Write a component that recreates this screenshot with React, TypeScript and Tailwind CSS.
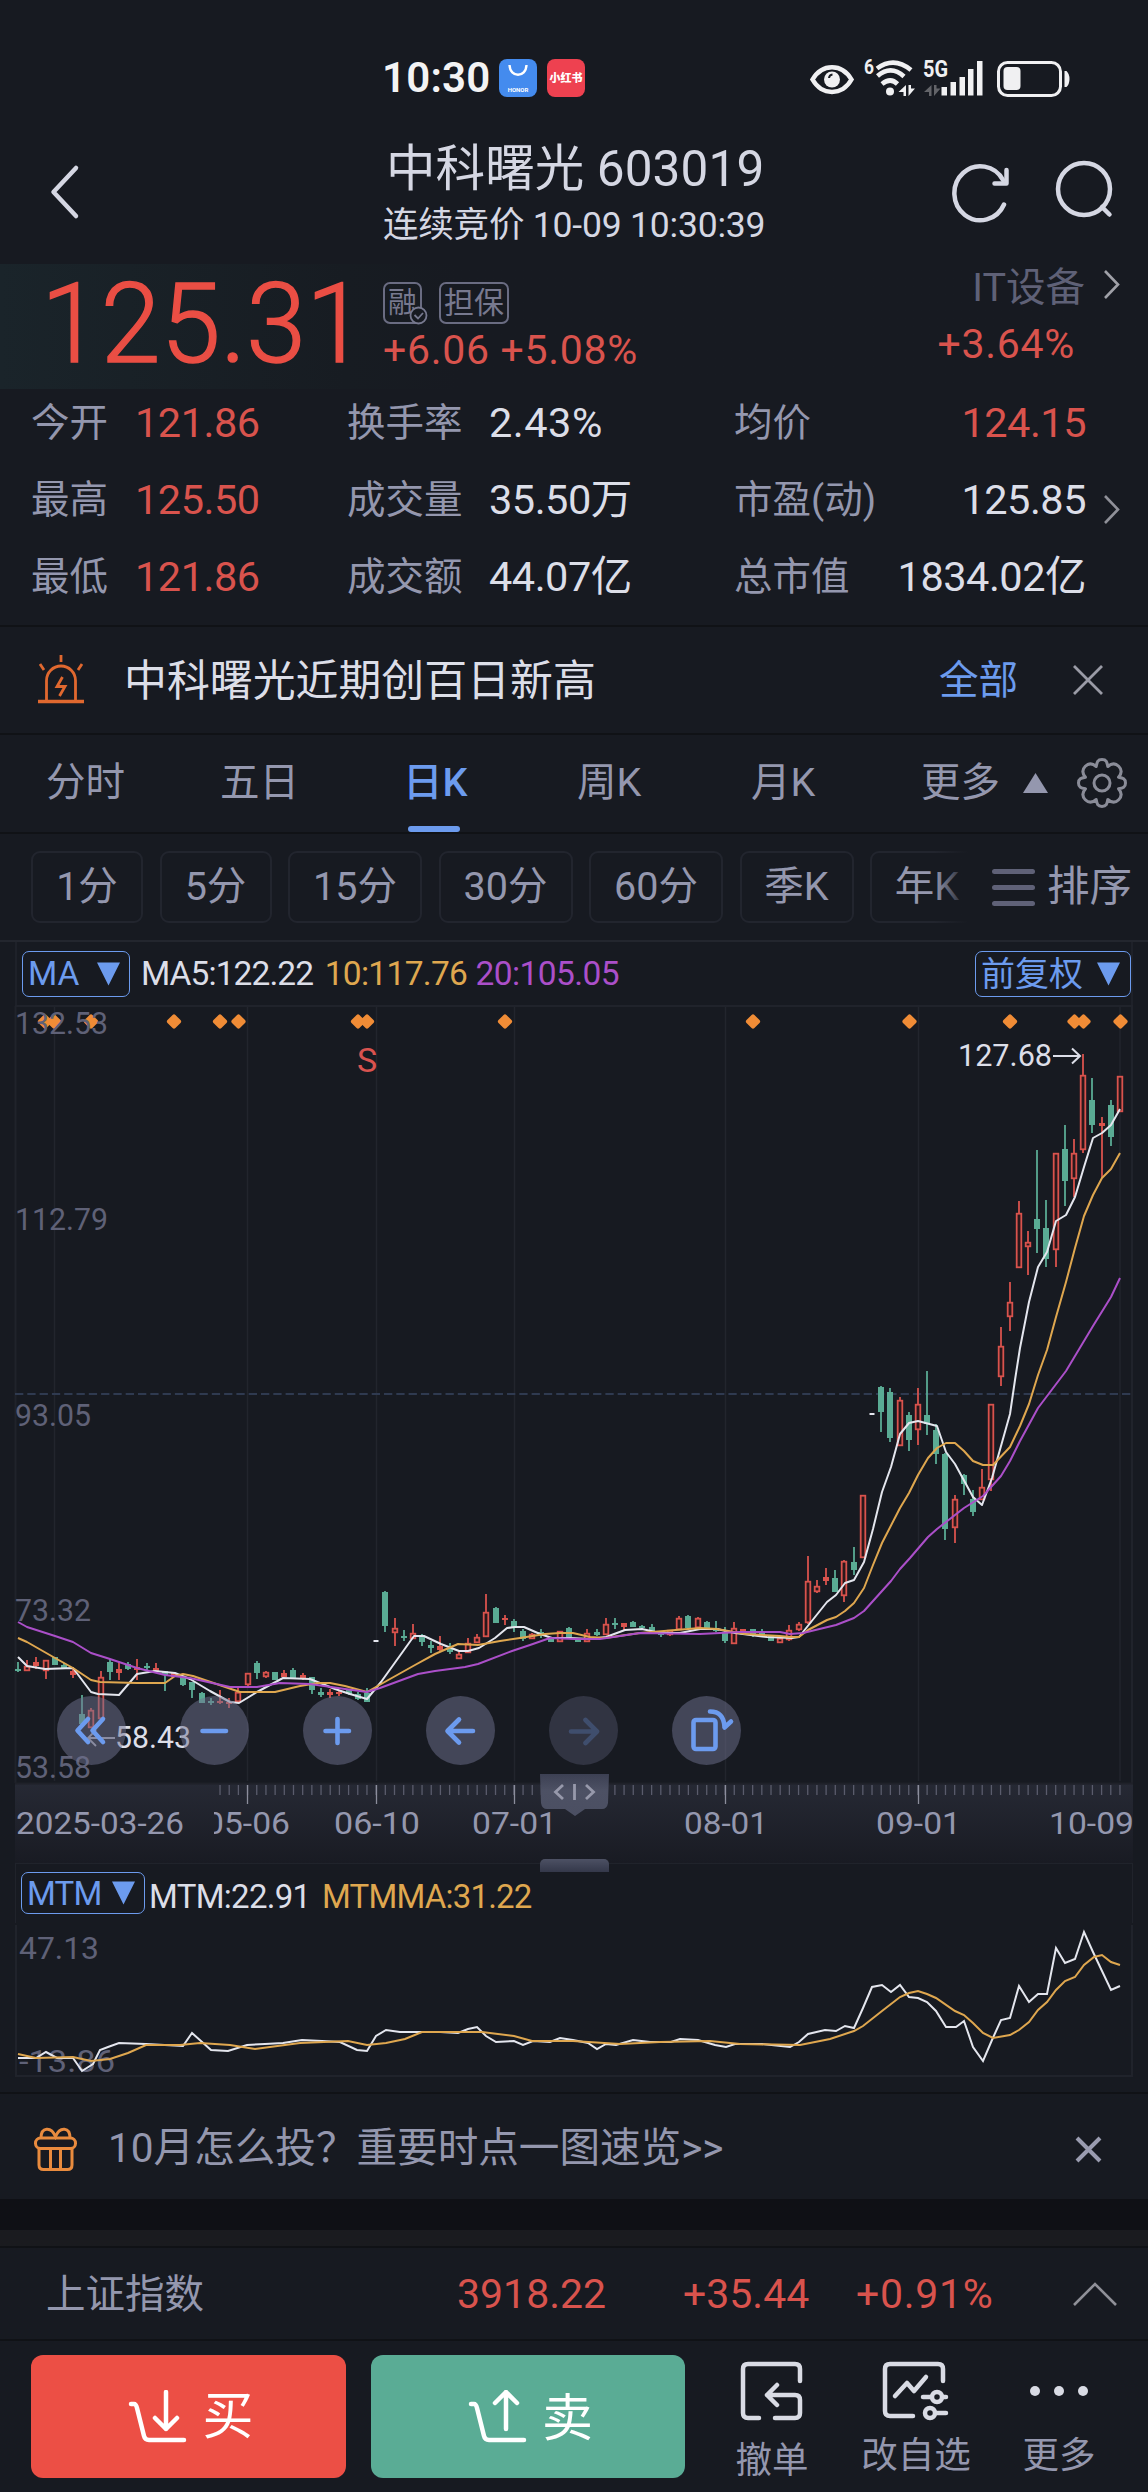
import React from 'react';

type Candle = [number, 'r' | 'g' | 'w', number, number, number, number];

/* index, colour, high, low, body top, body bottom */
const candles: Candle[] = [
  [0, 'g', 1662, 1672, 1669, 1671], [1, 'r', 1660, 1671, 1666, 1671], [2, 'r', 1657, 1669, 1662, 1666],
  [3, 'r', 1660, 1679, 1660, 1671], [4, 'g', 1657, 1665, 1657, 1665], [5, 'g', 1663, 1669, 1665, 1668],
  [6, 'r', 1668, 1678, 1671, 1675], [7, 'g', 1695, 1727, 1714, 1724], [8, 'r', 1708, 1728, 1710, 1728],
  [9, 'r', 1671, 1719, 1677, 1719], [10, 'g', 1659, 1680, 1662, 1672], [11, 'r', 1661, 1680, 1669, 1673],
  [12, 'g', 1662, 1670, 1664, 1669], [13, 'r', 1659, 1680, 1667, 1670], [14, 'g', 1663, 1671, 1666, 1667],
  [15, 'r', 1663, 1671, 1668, 1671], [16, 'g', 1671, 1691, 1671, 1675], [17, 'r', 1672, 1677, 1673, 1677],
  [18, 'g', 1676, 1686, 1677, 1685], [19, 'g', 1682, 1698, 1682, 1690], [20, 'g', 1692, 1703, 1693, 1703],
  [21, 'g', 1698, 1705, 1701, 1703], [22, 'r', 1690, 1704, 1701, 1703], [23, 'r', 1698, 1708, 1702, 1703],
  [24, 'r', 1688, 1703, 1692, 1702], [25, 'r', 1673, 1687, 1673, 1685], [26, 'g', 1661, 1679, 1663, 1673],
  [27, 'r', 1671, 1678, 1672, 1677], [28, 'g', 1672, 1680, 1672, 1680], [29, 'r', 1670, 1677, 1673, 1677],
  [30, 'g', 1668, 1679, 1670, 1679], [31, 'r', 1673, 1680, 1675, 1679], [32, 'g', 1677, 1694, 1677, 1690],
  [33, 'g', 1688, 1697, 1692, 1695], [34, 'r', 1689, 1698, 1692, 1695], [35, 'r', 1690, 1696, 1692, 1693],
  [36, 'g', 1690, 1695, 1690, 1694], [37, 'g', 1692, 1700, 1694, 1699], [38, 'g', 1688, 1702, 1693, 1702],
  [39, 'w', 1641, 1641, 1640, 1642], [40, 'g', 1591, 1632, 1592, 1626], [41, 'r', 1618, 1646, 1628, 1633],
  [42, 'g', 1630, 1641, 1636, 1637], [43, 'r', 1624, 1639, 1633, 1639], [44, 'g', 1634, 1646, 1636, 1642],
  [45, 'g', 1641, 1653, 1645, 1648], [46, 'r', 1636, 1651, 1646, 1650], [47, 'g', 1643, 1654, 1648, 1652],
  [48, 'r', 1652, 1659, 1654, 1659], [49, 'r', 1638, 1653, 1643, 1653], [50, 'r', 1634, 1643, 1637, 1643],
  [51, 'r', 1594, 1637, 1612, 1637], [52, 'g', 1607, 1623, 1608, 1623], [53, 'r', 1615, 1625, 1618, 1620],
  [54, 'g', 1619, 1632, 1621, 1628], [55, 'g', 1629, 1641, 1631, 1639], [56, 'r', 1633, 1639, 1634, 1639],
  [57, 'g', 1629, 1638, 1632, 1636], [58, 'g', 1637, 1642, 1638, 1642], [59, 'r', 1631, 1642, 1631, 1642],
  [60, 'g', 1627, 1638, 1628, 1637], [61, 'g', 1638, 1642, 1639, 1642], [62, 'r', 1629, 1642, 1633, 1642],
  [63, 'g', 1629, 1636, 1632, 1635], [64, 'r', 1618, 1635, 1624, 1635], [65, 'g', 1618, 1629, 1623, 1624],
  [66, 'r', 1623, 1630, 1623, 1627], [67, 'g', 1621, 1627, 1622, 1627], [68, 'g', 1625, 1629, 1626, 1628],
  [69, 'g', 1624, 1632, 1627, 1632], [70, 'g', 1632, 1637, 1633, 1635], [71, 'r', 1630, 1636, 1630, 1635],
  [72, 'r', 1616, 1630, 1618, 1630], [73, 'g', 1615, 1629, 1616, 1628], [74, 'r', 1617, 1629, 1618, 1628],
  [75, 'g', 1621, 1630, 1622, 1629], [76, 'g', 1621, 1632, 1628, 1631], [77, 'g', 1627, 1643, 1633, 1641],
  [78, 'r', 1622, 1644, 1628, 1644], [79, 'r', 1629, 1632, 1629, 1631], [80, 'g', 1629, 1637, 1629, 1634],
  [81, 'g', 1629, 1637, 1632, 1635], [82, 'g', 1635, 1641, 1636, 1641], [83, 'r', 1638, 1643, 1638, 1643],
  [84, 'r', 1625, 1641, 1630, 1640], [85, 'r', 1622, 1631, 1624, 1630], [86, 'r', 1556, 1624, 1581, 1623],
  [87, 'r', 1580, 1593, 1586, 1592], [88, 'r', 1568, 1585, 1577, 1581], [89, 'g', 1570, 1592, 1578, 1592],
  [90, 'r', 1560, 1602, 1561, 1596], [91, 'g', 1547, 1575, 1562, 1570], [92, 'r', 1495, 1558, 1495, 1558],
  [93, 'w', 1414, 1414, 1413, 1415], [94, 'g', 1386, 1432, 1387, 1412], [95, 'g', 1388, 1442, 1392, 1438],
  [96, 'r', 1397, 1446, 1400, 1446], [97, 'g', 1412, 1451, 1415, 1440], [98, 'r', 1388, 1445, 1404, 1430],
  [99, 'g', 1371, 1435, 1415, 1424], [100, 'g', 1424, 1464, 1430, 1454], [101, 'g', 1453, 1540, 1454, 1529],
  [102, 'r', 1495, 1543, 1499, 1528], [103, 'g', 1474, 1495, 1475, 1484], [104, 'g', 1490, 1516, 1499, 1512],
  [105, 'r', 1469, 1500, 1487, 1500], [106, 'r', 1404, 1491, 1404, 1480], [107, 'r', 1327, 1386, 1346, 1377],
  [108, 'r', 1282, 1331, 1302, 1317], [109, 'r', 1201, 1268, 1213, 1268], [110, 'r', 1231, 1275, 1242, 1247],
  [111, 'g', 1150, 1253, 1219, 1229], [112, 'g', 1200, 1267, 1228, 1259], [113, 'r', 1153, 1267, 1153, 1250],
  [114, 'g', 1125, 1206, 1149, 1181], [115, 'r', 1139, 1197, 1153, 1179], [116, 'r', 1054, 1153, 1075, 1150],
  [117, 'g', 1078, 1133, 1100, 1125], [118, 'r', 1117, 1178, 1123, 1126], [119, 'g', 1100, 1146, 1105, 1137],
  [120, 'r', 1076, 1112, 1076, 1112],
];

const ma5 =
  '18,1657 27,1666 45,1669 73,1668 82,1680 91,1692 98,1694 119,1695 137,1674 155,1671 175,1673 190,1679 210,1691 230,1702 239,1703 257,1692 283,1678 310,1679 335,1689 350,1694 367,1699 381,1682 404,1650 414,1636 424,1636 441,1644 459,1651 468,1651 479,1648 495,1638 507,1628 515,1627 524,1627 540,1634 552,1638 570,1638 590,1639 606,1637 625,1630 642,1629 660,1633 680,1633 700,1629 717,1629 735,1633 767,1637 792,1638 799,1637 803,1632 827,1602 836,1595 845,1583 854,1580 864,1562 873,1529 882,1492 891,1467 900,1434 909,1423 918,1421 937,1426 946,1452 955,1464 973,1497 982,1505 992,1478 1010,1414 1015,1380 1020,1348 1029,1302 1038,1267 1047,1252 1056,1221 1066,1215 1075,1197 1084,1167 1093,1138 1102,1133 1111,1125 1120,1109';
const ma10 =
  '18,1638 27,1642 55,1658 73,1668 91,1680 100,1682 137,1683 165,1683 175,1676 183,1674 193,1676 240,1692 275,1692 300,1686 318,1683 330,1683 345,1686 367,1692 390,1679 415,1665 435,1654 458,1644 478,1645 500,1641 520,1638 545,1634 560,1633 573,1633 590,1637 605,1638 640,1633 700,1628 717,1629 745,1634 780,1636 790,1637 799,1637 808,1630 827,1620 836,1617 845,1611 854,1603 864,1588 873,1565 882,1543 900,1508 909,1493 918,1475 928,1458 937,1448 946,1443 955,1443 964,1451 973,1461 983,1465 993,1465 1010,1447 1020,1426 1029,1404 1038,1375 1047,1350 1056,1317 1066,1282 1075,1248 1084,1216 1093,1195 1102,1178 1111,1169 1120,1153';
const ma20 =
  '18,1622 27,1627 55,1636 73,1642 91,1653 110,1659 137,1668 165,1675 190,1678 230,1687 257,1687 280,1683 310,1684 345,1689 367,1692 380,1688 418,1674 435,1671 465,1667 478,1664 512,1651 530,1645 550,1638 575,1639 600,1639 640,1633 700,1634 740,1632 780,1632 790,1634 803,1633 836,1625 854,1618 864,1611 891,1581 900,1569 910,1558 928,1537 937,1529 964,1508 983,1496 1001,1476 1010,1461 1020,1441 1038,1408 1066,1371 1093,1326 1111,1297 1120,1278';
const mtm =
  '18,2058 36,2058 46,2052 57,2058 73,2058 82,2071 93,2064 100,2050 108,2047 119,2043 146,2044 183,2046 192,2033 211,2050 228,2051 247,2045 265,2044 283,2043 302,2040 322,2041 340,2042 357,2050 367,2051 376,2036 386,2030 400,2032 425,2032 440,2032 458,2033 468,2029 477,2027 486,2036 496,2042 514,2041 523,2045 533,2041 550,2042 560,2038 573,2040 588,2043 597,2049 606,2044 616,2045 633,2040 650,2042 671,2042 680,2039 698,2040 715,2045 726,2047 735,2044 762,2044 790,2047 799,2042 808,2034 825,2030 836,2031 845,2026 854,2028 863,2008 872,1987 882,1985 891,1992 900,1985 909,1997 918,1998 927,2002 936,2011 946,2027 956,2027 964,2021 973,2047 983,2061 992,2040 1001,2020 1010,2018 1019,1986 1029,2002 1038,1994 1047,1994 1056,1948 1065,1963 1075,1959 1084,1932 1093,1952 1111,1990 1120,1986';
const mtmMa =
  '18,2054 36,2058 73,2057 91,2061 110,2059 128,2053 146,2045 180,2045 200,2043 230,2045 255,2049 300,2043 348,2041 367,2045 386,2043 405,2039 422,2032 460,2032 482,2032 514,2036 532,2041 573,2041 620,2044 660,2042 710,2041 740,2044 800,2045 830,2039 854,2031 863,2026 882,2011 900,1997 909,1993 918,1991 927,1994 936,1998 955,2011 964,2015 973,2023 983,2033 993,2038 1010,2035 1019,2030 1029,2022 1038,2010 1047,2002 1056,1990 1065,1981 1075,1977 1084,1965 1094,1957 1102,1955 1111,1962 1120,1965';

const candleX = (i: number) => 18 + i * 9.183;
const monthLines = [54.5, 247.5, 376.5, 514.5, 725.5, 918.5, 1120];
const events = [45, 54, 91, 174, 220, 238.5, 358, 367, 505, 753, 909.5, 1010, 1074.5, 1083.5, 1120.5];
const tone = { r: '#d9534d', g: '#5aab94', w: '#e4e6ee' };

function Candles() {
  return (
    <g>
      {candles.map(([i, c, hi, lo, top, bot]) => {
        const x = Math.round(candleX(i));
        const h = Math.max(bot - top, 2);
        const hollow = c === 'r' && h > 4;
        return (
          <g key={i} stroke={tone[c]} strokeWidth="1.8">
            {hi < top && <path d={`M${x} ${hi}V${top}`} />}
            {lo > bot && <path d={`M${x} ${bot}V${lo}`} />}
            {hollow ? (
              <rect x={x - 2.3} y={top + 0.7} width="4.6" height={h - 1.4} fill="#2a181b" />
            ) : (
              <rect x={x - (c === 'w' ? 2.5 : 3)} y={top} width={c === 'w' ? 5 : 6} height={h} fill={tone[c]} stroke="none" />
            )}
          </g>
        );
      })}
    </g>
  );
}

function Axis({ x, y, w, t, fill = '#5f6177' }: { x: number; y: number; w: number; t: string; fill?: string }) {
  return (
    <text x={x} y={y} textLength={w} lengthAdjust="spacingAndGlyphs" fontSize="32" fill={fill}>
      {t}
    </text>
  );
}

function PriceChart() {
  return (
    <svg className="block" width="1148" height="858" viewBox="0 1005 1148 858">
      <defs>
        <linearGradient id="ruler" x1="0" y1="0" x2="0" y2="1">
          <stop offset="0" stopColor="#262934" />
          <stop offset="1" stopColor="#191b23" />
        </linearGradient>
        <linearGradient id="grip" x1="0" y1="0" x2="0" y2="1">
          <stop offset="0" stopColor="#3c4053" />
          <stop offset="0.4" stopColor="#4d5164" />
          <stop offset="1" stopColor="#4b4f62" />
        </linearGradient>
        <clipPath id="may">
          <rect x="214" y="1800" width="100" height="50" />
        </clipPath>
      </defs>
      <path d="M15 1006H1133M15.5 1006V1783M1132 1006V1783" stroke="#20232b" strokeWidth="2" fill="none" />
      {monthLines.map((x) => (
        <path key={x} d={`M${x} 1007V1781`} stroke="#22252d" strokeWidth="1.5" />
      ))}
      <path d="M15 1394H1133" stroke="#2f3a50" strokeWidth="2" strokeDasharray="8.3 4" />
      {events.map((x) => (
        <rect key={x} x={x - 5.6} y={1015.900} width="11.200" height="11.200" rx="2" fill="#f08c36" transform={`rotate(45 ${x} 1021.5)`} />
      ))}
      <Axis x={15} y={1034} w={93} t="132.53" />
      <Axis x={15} y={1230} w={93} t="112.79" />
      <Axis x={15} y={1426} w={76} t="93.05" />
      <Axis x={15} y={1621} w={76} t="73.32" />
      <Axis x={15} y={1778} w={76} t="53.58" />
      <text x="357" y="1072" fontSize="34" fill="#d9534f">S</text>
      <Candles />
      <polyline points={ma5} fill="none" stroke="#e4e6ee" strokeWidth="2" strokeLinejoin="round" />
      <polyline points={ma10} fill="none" stroke="#dfa74f" strokeWidth="2" strokeLinejoin="round" />
      <polyline points={ma20} fill="none" stroke="#ab4fc9" strokeWidth="2" strokeLinejoin="round" />
      <Axis x={958} y={1066} w={94} t="127.68" fill="#dcdee8" />
      <path d="M1053 1056H1079M1072 1048.5L1080 1056L1072 1063.5" stroke="#dcdee8" strokeWidth="2" fill="none" />
      <Axis x={115} y={1748} w={76} t="58.43" fill="#dcdee8" />
      <path d="M115 1738H88M96 1730L88 1738L96 1746" stroke="#a5a7b2" strokeWidth="1.8" fill="none" />
      <rect x="15" y="1783" width="1118" height="80" fill="url(#ruler)" />
      <path d="M15 1783.5H1133" stroke="#1f2129" strokeWidth="2" />
      {Array.from({ length: 99 }, (_, k) => k + 22).map((i) => (
        <path key={i} d={`M${candleX(i)} 1785V1795`} stroke="#5a5c6c" strokeWidth="1.3" />
      ))}
      {monthLines.slice(1, 6).map((x) => (
        <path key={x} d={`M${x} 1785V1804`} stroke="#8b8d9c" strokeWidth="1.3" />
      ))}
      <Axis x={16} y={1834} w={168} t="2025-03-26" fill="#9497ae" />
      <g clipPath="url(#may)">
        <Axis x={205} y={1834} w={85} t="05-06" fill="#9497ae" />
      </g>
      <Axis x={334} y={1834} w={86} t="06-10" fill="#9497ae" />
      <Axis x={472} y={1834} w={85} t="07-01" fill="#9497ae" />
      <Axis x={684} y={1834} w={84} t="08-01" fill="#9497ae" />
      <Axis x={876} y={1834} w={85} t="09-01" fill="#9497ae" />
      <Axis x={1049} y={1834} w={85} t="10-09" fill="#9497ae" />
      <path d="M540 1774H609L608 1803Q607 1809 602 1809H585L575 1816L565 1809H547Q542 1809 541 1803Z" fill="url(#grip)" />
      <path d="M563 1785L555.5 1792L563 1799M586 1785L593.5 1792L586 1799M574.5 1784V1800" stroke="#9799ab" strokeWidth="2.8" fill="none" />
    </svg>
  );
}

function RoundButton({ muted, children }: { muted?: boolean; children: React.ReactNode }) {
  return (
    <div className={`flex size-[69px] items-center justify-center rounded-full ${muted ? 'bg-[#5a5c76]/40' : 'bg-[#6f728f]/50'}`}>
      <svg width="69" height="69" viewBox="0 0 69 69" fill="none" stroke="#6c9bee" strokeWidth="4.6" strokeLinecap="round" strokeLinejoin="round" className={muted ? 'opacity-25' : ''}>
        {children}
      </svg>
    </div>
  );
}

function Stat({ label, value, red, right }: { label: string; value: string; red?: boolean; right?: boolean }) {
  return (
    <div className={`flex items-center ${right ? 'justify-between' : ''}`}>
      <span className={`text-[#9497ae] ${right ? '' : label.length === 2 ? 'w-[104px]' : 'w-[142px]'}`}>{label}</span>
      <span className={`text-[41.5px] ${value.endsWith('%') ? 'tracking-[0.5px]' : 'tracking-[-0.5px]'} ${red ? 'text-[#d9534d]' : 'text-[#dcdee8]'}`}>{value}</span>
    </div>
  );
}

function Down() {
  return (
    <svg width="23" height="24" viewBox="0 0 24 24"><path d="M0 0H24L12 24Z" fill="#6c9bee" /></svg>
  );
}

const chip = 'flex h-[72px] shrink-0 items-center justify-center rounded-[9px] border-2 border-[#22252e]';

export default function App() {
  return (
    <div className="flex h-[2492px] w-[1148px] flex-col overflow-hidden whitespace-nowrap bg-[#171a21] font-['Roboto','Noto_Sans_CJK_SC',sans-serif] leading-none text-[#d5d7e3]">
      {/* status bar */}
      <div className="flex h-[130px] shrink-0 items-center pl-[382px] pt-[26px]">
        <span className="w-[117px] text-[42px] font-semibold tracking-[0.2px] text-[#f3f3f4]">10:30</span>
        <div className="flex size-[38px] flex-col items-center rounded-[8px] bg-[#448bee] pt-[5px]">
          <svg width="20" height="13" viewBox="0 0 20 13"><path d="M1.5 1C2 14 18 14 18.500 1" fill="none" stroke="#fff" strokeWidth="2.4" /></svg>
          <span className="mt-[10px] text-[6px] font-bold text-white">HONOR</span>
        </div>
        <div className="ml-[10px] flex size-[38px] items-center justify-center rounded-[8px] bg-[#ee4150] text-[11px] font-black text-white">小红书</div>
        <svg className="ml-[223px]" width="264" height="46" viewBox="808 54 264 46" fill="none" stroke="#f0f0f2">
          <path d="M812.500 78.500C822 62 842 62 851.500 78.500C842 95 822 95 812.500 78.500Z" strokeWidth="4.5" />
          <circle cx="832" cy="78.500" r="8" fill="#f0f0f2" stroke="none" />
          <path d="M829 77a4 4 0 0 1 3.500-3.500" stroke="#171a21" strokeWidth="2" />
          <g strokeWidth="4.600">
            <path d="M877 67.500Q894 55 911 69" /><path d="M877.500 75Q891 63.500 904 75.500" /><path d="M882 83Q890.500 76 897.500 83" />
          </g>
          <circle cx="890" cy="90.500" r="4" fill="#f0f0f2" stroke="none" />
          <g fill="#f0f0f2" stroke="none">
            <path d="M906 84v11h-2.500v-4l-5 0zM908.500 95v-11h2.500v3.500l4 0z" />
            <path d="M931.500 84v11h-2.500v-4l-5 0zM934 95v-11h2.500v3.500l4 0z" opacity="0.35" />
            <path d="M941.500 86h5.500v8.500h-5.500zM950.500 81h5.500v13.500h-5.500zM959.500 76h5.500v18.500h-5.500zM968 68h5.500v26.500h-5.500zM977 60h5.500v34.500h-5.500z" />
            <text x="864" y="73" fontSize="20" fontWeight="700" textLength="10" lengthAdjust="spacingAndGlyphs">6</text>
            <text x="923" y="76" fontSize="23" fontWeight="700" textLength="25" lengthAdjust="spacingAndGlyphs">5G</text>
            <rect x="1003.500" y="66" width="17" height="23" rx="4" />
            <path d="M1064.500 70h2q3 3 3 8t-3 8h-2z" />
          </g>
          <rect x="998.500" y="61.500" width="62" height="33" rx="9" strokeWidth="3" />
        </svg>
      </div>

      {/* header */}
      <div className="relative flex h-[134px] shrink-0 items-start">
        <svg className="ml-[49px] mt-[34px]" width="32" height="56" viewBox="0 0 32 56"><path d="M27 4L4.500 28L27 52" fill="none" stroke="#d5d7e3" strokeWidth="4.500" strokeLinecap="round" strokeLinejoin="round" /></svg>
        <div className="ml-[302px] flex w-[560px] flex-col pt-[15px]">
          <div className="ml-[3px] text-[49.500px] tracking-[0.1px]">中科曙光 603019</div>
          <div className="mt-[13px] text-[35.500px] tracking-[-0.2px]">连续竞价 10-09 10:30:39</div>
        </div>
        <svg className="ml-[7px] mt-[30px]" width="170" height="64" viewBox="950 160 170 64" fill="none" stroke="#d5d7e3" strokeWidth="4.500" strokeLinecap="round" strokeLinejoin="round">
          <path d="M1004 204.500A26 27 0 1 1 1003 180" /><path d="M1006.500 170V183.500H994.500" />
          <circle cx="1084" cy="189" r="26" /><path d="M1102 207L1109.500 214.500" />
        </svg>
      </div>

      {/* price */}
      <div className="flex h-[125px] shrink-0 bg-linear-to-r from-[#1a242a] via-[#171c22] via-30% to-[#171a21] to-40%">
        <div className="w-[383px] pl-[41px] pt-[4px]">
          <div className="w-max origin-left scale-x-[0.963] text-[112px] font-light text-[#ea4e44] [-webkit-text-stroke:1.5px_#ea4e44]">125.31</div>
        </div>
        <div className="w-[400px] pt-[18px]">
          <div className="flex items-center gap-[17px] text-[#77798f]">
            <div className="relative flex h-[42px] w-[39px] items-center justify-center rounded-[7px] border-2 border-[#6a6c82] text-[29px]">
              融
              <svg className="absolute -bottom-[3px] -right-[8px]" width="19" height="19" viewBox="0 0 19 19" fill="#171a21" stroke="#77798f" strokeWidth="1.800"><circle cx="9.500" cy="9.500" r="8" /><path d="M5.500 9L9 12.500L14 7" fill="none" /></svg>
            </div>
            <div className="flex h-[42px] w-[70px] items-center justify-center rounded-[7px] border-2 border-[#6a6c82] text-[30px]">担保</div>
          </div>
          <div className="mt-[6px] text-[41px] tracking-[0.7px] text-[#d9534d]">+6.06 +5.08%</div>
        </div>
        <div className="flex w-[302px] flex-col items-end pt-[4px]">
          <div className="text-[39.500px] text-[#5f6177]">IT设备</div>
          <div className="mr-[10px] mt-[16px] text-[41px] tracking-[0.7px] text-[#d9534d]">+3.64%</div>
        </div>
        <svg className="ml-[17px] mt-[5px]" width="20" height="32" viewBox="0 0 20 32"><path d="M3 2L16 15.500L3 29" fill="none" stroke="#a0a1a8" strokeWidth="2.600" /></svg>
      </div>

      {/* quote figures */}
      <div className="flex h-[236px] shrink-0 pl-[31px] pt-[15px] text-[38.500px]">
        <div className="grid h-[192px] w-[1055px] grid-cols-[316px_387px_352px] grid-rows-[38px_38px_38px] gap-y-[39px]">
          <Stat label="今开" value="121.86" red />
          <Stat label="换手率" value="2.43%" />
          <Stat label="均价" value="124.15" red right />
          <Stat label="最高" value="125.50" red />
          <Stat label="成交量" value="35.50万" />
          <Stat label="市盈(动)" value="125.85" right />
          <Stat label="最低" value="121.86" red />
          <Stat label="成交额" value="44.07亿" />
          <Stat label="总市值" value="1834.02亿" right />
        </div>
        <svg className="ml-[16px] mt-[90px]" width="20" height="32" viewBox="0 0 20 32"><path d="M3 2L16 15.500L3 29" fill="none" stroke="#8f9098" strokeWidth="2.600" /></svg>
      </div>

      {/* alert */}
      <div className="flex h-[108px] shrink-0 items-center border-t-2 border-[#101216] pl-[37px]">
        <svg width="48" height="50" viewBox="0 0 48 50" fill="none" stroke="#e0682f" strokeWidth="2.800">
          <path d="M1 46.500H47" strokeWidth="3.500" /><path d="M9.500 46V25.500a14.500 14.500 0 0 1 29 0V46" /><path d="M24 0V7M3 9L7 15M45 9L41 15" /><path d="M25.500 22L20 31.500H28L22.500 41" />
        </svg>
        <span className="ml-[39px] w-[815px] pt-[3px] text-[42.900px] text-[#dcdee8]">中科曙光近期创百日新高</span>
        <span className="w-[80px] pt-[2px] text-[39.500px] text-[#6c9bee]">全部</span>
        <svg className="ml-[53px]" width="32" height="32" viewBox="0 0 32 32"><path d="M2 2L30 30M30 2L2 30" stroke="#9a9ba6" strokeWidth="2.800" /></svg>
      </div>

      {/* period tabs */}
      <div className="flex h-[99px] shrink-0 items-center border-t-2 border-[#101216] pb-[1px] pl-[46px] text-[39.500px] text-[#9497ae]">
        <span className="w-[174px]">分时</span>
        <span className="w-[183px]">五日</span>
        <span className="relative w-[174px] font-medium text-[#6c9bee]">
          日K
          <i className="absolute left-[5px] top-[63px] h-[6px] w-[52px] rounded-full bg-[#6c9bee]" />
        </span>
        <span className="w-[174px]">周K</span>
        <span className="w-[170px]">月K</span>
        <span className="w-[102px]">更多</span>
        <svg width="25" height="20" viewBox="0 0 25 20"><path d="M12.500 0L25 20H0Z" fill="#9497ae" /></svg>
        <svg className="ml-[28px]" width="52" height="52" viewBox="0 0 52 52" fill="none" stroke="#8a8c98" strokeWidth="3" strokeLinejoin="round">
          <path d="M26 2.500C30.500 2.500 31 5 31.800 9.500C36 5.800 39.200 5.800 42.700 9.300C46.200 12.800 46.200 16 42.500 20.200C47 21 49.500 21.500 49.500 26C49.500 30.500 47 31 42.500 31.800C46.200 36 46.200 39.200 42.700 42.700C39.200 46.200 36 46.200 31.800 42.500C31 47 30.500 49.500 26 49.500C21.500 49.500 21 47 20.200 42.500C16 46.200 12.800 46.200 9.300 42.700C5.800 39.200 5.800 36 9.500 31.800C5 31 2.500 30.500 2.500 26C2.500 21.500 5 21 9.500 20.200C5.800 16 5.800 12.800 9.300 9.300C12.800 5.800 16 5.800 20.200 9.500C21 5 21.500 2.500 26 2.500Z" />
          <circle cx="26" cy="26" r="8" />
        </svg>
      </div>

      {/* minute periods */}
      <div className="flex h-[108px] shrink-0 items-center border-t-2 border-[#101216] pl-[31px] text-[39.500px] text-[#9497ae]">
        <div className="relative flex w-[937px] gap-[16.500px] overflow-hidden">
          <div className={`${chip} w-[112px]`}>1分</div>
          <div className={`${chip} w-[112px]`}>5分</div>
          <div className={`${chip} w-[134px]`}>15分</div>
          <div className={`${chip} w-[134px]`}>30分</div>
          <div className={`${chip} w-[134px]`}>60分</div>
          <div className={`${chip} w-[114px]`}>季K</div>
          <div className={`${chip} w-[114px]`}>年K</div>
          <i className="absolute right-0 top-0 h-full w-[34px] bg-linear-to-r from-transparent to-[#171a21]" />
        </div>
        <div className="ml-[24px] flex h-[37px] w-[43px] flex-col justify-between">
          <i className="h-[5px] rounded-full bg-[#5f6177]" />
          <i className="h-[5px] rounded-full bg-[#5f6177]" />
          <i className="h-[5px] rounded-full bg-[#5f6177]" />
        </div>
        <span className="ml-[12px] text-[42.500px]">排序</span>
      </div>

      {/* price chart */}
      <div className="flex h-[65px] shrink-0 border-t-2 border-[#23262e] px-[15px]">
        <div className="flex w-full items-center border-x-2 border-[#1e2129] pl-[5px] text-[33.500px]">
          <div className="flex h-[46px] w-[108px] items-center justify-between rounded-[7px] border-[1.500px] border-[#6c9bee] pl-[5px] pr-[9px] text-[#6c9bee]">MA<Down /></div>
          <span className="ml-[11px] w-[184px] tracking-[-0.9px] text-[#dcdee8]">MA5:122.22</span>
          <span className="w-[151px] tracking-[-0.7px] text-[#dfa74f]">10:117.76</span>
          <span className="w-[500px] tracking-[-0.6px] text-[#ab4fc9]">20:105.05</span>
          <div className="flex h-[46px] w-[156px] shrink-0 items-center justify-between rounded-[7px] border-[1.500px] border-[#6c9bee] pl-[5px] pr-[10px] text-[34px] text-[#6c9bee]">前复权<Down /></div>
        </div>
      </div>
      <div className="relative h-[858px] shrink-0">
        <PriceChart />
        <div className="absolute left-[57px] top-[691px] flex gap-[54px]">
          <RoundButton><path d="M31 23L20.500 34.500L31 46M46 23L35.500 34.500L46 46" /></RoundButton>
          <RoundButton><path d="M22.500 35H46" /></RoundButton>
          <RoundButton><path d="M22.500 35H46M34.500 23V47" /></RoundButton>
          <RoundButton><path d="M47 35H22M33 23.500L21.500 35L33 46.500" /></RoundButton>
          <RoundButton muted><path d="M22 35.500H47M36.500 24L48 35.500L36.500 47" /></RoundButton>
          <RoundButton><rect x="21.500" y="24" width="22" height="29" rx="2.500" /><path d="M38 15.500C47 15.500 52 21 52.500 31M52.500 31.500L59 25.500" /></RoundButton>
        </div>
      </div>

      {/* momentum chart */}
      <div className="relative flex h-[60px] shrink-0 px-[15px]">
        <i className="absolute -top-[4px] left-[540px] h-[13px] w-[69px] rounded-t-[5px] bg-linear-to-b from-[#4d5164] to-[#34384a]" />
        <div className="flex w-full items-start border-x-[1.500px] border-t-[1.500px] border-[#20232b] pl-[5px] pt-[8px] text-[33px]">
          <div className="flex h-[42px] w-[124px] items-center justify-between rounded-[7px] border-[1.500px] border-[#6c9bee] pl-[5px] pr-[9px] tracking-[-0.8px] text-[#6c9bee]">MTM<Down /></div>
          <span className="ml-[4px] w-[173px] pt-[8px] tracking-[-0.7px] text-[#dcdee8]">MTM:22.91</span>
          <span className="pt-[8px] tracking-[-0.8px] text-[#dfa74f]">MTMMA:31.22</span>
        </div>
      </div>
      <svg className="block shrink-0" width="1148" height="169" viewBox="0 1923 1148 169">
        <path d="M16 1925V2076H1132V1925" stroke="#20232b" strokeWidth="2" fill="none" />
        <Axis x={19} y={1959} w={80} t="47.13" />
        <Axis x={19} y={2072} w={96} t="-13.86" />
        <polyline points={mtm} fill="none" stroke="#e4e6ee" strokeWidth="2" />
        <polyline points={mtmMa} fill="none" stroke="#dfa74f" strokeWidth="2" />
      </svg>

      {/* promo */}
      <div className="flex h-[107px] shrink-0 items-center border-t-2 border-[#101216] pl-[34px] pt-[5px]">
        <svg width="43" height="44" viewBox="0 0 43 44" fill="none" stroke="#e98b3e" strokeWidth="3">
          <rect x="1.500" y="11" width="40" height="10.500" rx="5" /><path d="M5 22V38Q5 42.500 9.500 42.500H33.500Q38 42.500 38 38V22" /><path d="M16.500 22V42M26.500 22V42" /><path d="M7 11C7 0 17 -1 21.500 9.500C26 -1 36 0 36 11" />
        </svg>
        <span className="ml-[31px] pb-[2px] text-[40.600px] text-[#9497ae]">10月怎么投？重要时点一图速览&gt;&gt;</span>
        <svg className="ml-auto mr-[46px]" width="27" height="27" viewBox="0 0 27 27"><path d="M2 2L25 25M25 2L2 25" stroke="#9a9cb0" strokeWidth="4" /></svg>
      </div>
      <div className="h-[31px] shrink-0 bg-[#0f1015]" />
      <div className="h-[16px] shrink-0 bg-[#1a1b1f]" />

      {/* index */}
      <div className="flex h-[93px] shrink-0 items-center border-t-2 border-[#101216] pl-[46px] pt-[2px] text-[41px] text-[#d9534d]">
        <span className="w-[411px] text-[39.500px] text-[#9497ae]">上证指数</span>
        <span className="w-[226px]">3918.22</span>
        <span className="w-[173px]">+35.44</span>
        <span className="w-[216px] tracking-[0.7px]">+0.91%</span>
        <svg width="46" height="26" viewBox="0 0 46 26"><path d="M2 23L23 2L44 23" fill="none" stroke="#8f9098" strokeWidth="2.600" /></svg>
      </div>

      {/* trade bar */}
      <div className="flex h-[153px] shrink-0 items-start border-t-2 border-[#101216] pl-[31px] pt-[14px]">
        <div className="flex h-[123px] w-[315px] items-center justify-center gap-[14px] rounded-[12px] bg-[#ec4f45] pl-[5px] text-[51px] text-white">
          <svg width="60" height="54" viewBox="0 0 60 54" fill="none" stroke="#fff" strokeWidth="4.500" strokeLinecap="round" strokeLinejoin="round"><path d="M3 14H6Q8 14 9 18L16 46Q17 50 21 50H56M38 2V39M27 28L38 39L49 28" /></svg>
          <span>买</span>
        </div>
        <div className="ml-[25px] flex h-[123px] w-[314px] items-center justify-center gap-[14px] rounded-[12px] bg-[#5aac95] pl-[5px] text-[51px] text-white">
          <svg width="60" height="54" viewBox="0 0 60 54" fill="none" stroke="#fff" strokeWidth="4.500" strokeLinecap="round" strokeLinejoin="round"><path d="M3 14H6Q8 14 9 18L16 46Q17 50 21 50H56M38 39V2M27 13L38 2L49 13" /></svg>
          <span className="pt-[3px]">卖</span>
        </div>
        <div className="ml-[38px] flex w-[98px] flex-col items-center pt-[5px] text-[36.500px] text-[#9497ae]">
          <svg width="66" height="62" viewBox="0 0 66 62" fill="none" stroke="#d9dbe4" strokeWidth="4.500" strokeLinecap="round" strokeLinejoin="round">
            <path d="M61 21V9Q61 4 56 4H9Q4 4 4 9V53Q4 58 9 58H20M36 58H56Q61 58 61 53V40Q61 35 56 35H28M38 25L28 35L38 45" />
          </svg>
          <span className="mt-[21px]">撤单</span>
        </div>
        <div className="ml-[29px] flex w-[132px] flex-col items-center pt-[5px] text-[36.500px] text-[#9497ae]">
          <svg width="70" height="62" viewBox="0 0 70 62" fill="none" stroke="#d9dbe4" strokeWidth="4.500" strokeLinecap="round" strokeLinejoin="round">
            <path d="M62 21V9Q62 4 57 4H9Q4 4 4 9V51Q4 56 9 56H32M14 36L26 23L33 31L45 17" />
            <circle cx="56" cy="37" r="5" /><circle cx="49" cy="53" r="5" /><path d="M42 37H50M62 37H65M55 53H65" />
          </svg>
          <span className="mt-[16px]">改自选</span>
        </div>
        <div className="ml-[29px] flex w-[96px] flex-col items-center pt-[5px] text-[36.500px] text-[#9497ae]">
          <svg width="62" height="62" viewBox="0 0 62 62" fill="#d9dbe4"><circle cx="7" cy="31" r="5" /><circle cx="31" cy="31" r="5" /><circle cx="55" cy="31" r="5" /></svg>
          <span className="mt-[16px]">更多</span>
        </div>
      </div>
    </div>
  );
}
